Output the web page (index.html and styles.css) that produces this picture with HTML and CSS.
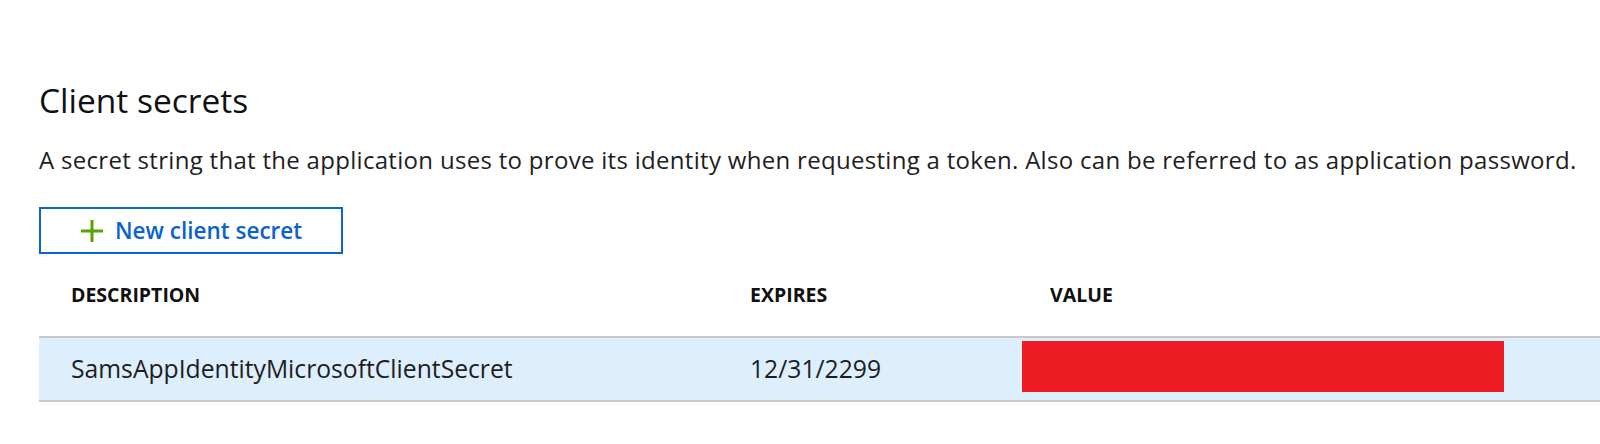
FILE: index.html
```html
<!DOCTYPE html>
<html lang="en">
<head>
<meta charset="utf-8">
<title>Client secrets</title>
<link rel="stylesheet" href="styles.css">
</head>
<body>
<section class="panel">
  <h2 class="title">Client secrets</h2>
  <p class="desc">A secret string that the application uses to prove its identity when requesting a token. Also can be referred to as application password.</p>
  <button class="new-btn" type="button">
    <svg class="plus" width="24" height="24" viewBox="0 0 24 24" aria-hidden="true"><path d="M12 1v22M1 12h22" stroke="#57a300" stroke-width="3" fill="none"/></svg>
    <span>New client secret</span>
  </button>
  <div class="table">
    <div class="thead">
      <div class="th">DESCRIPTION</div>
      <div class="th">EXPIRES</div>
      <div class="th">VALUE</div>
    </div>
    <div class="trow">
      <div class="td">SamsAppIdentityMicrosoftClientSecret</div>
      <div class="td">12/31/2299</div>
      <div class="td value"><div class="redact"></div></div>
    </div>
  </div>
</section>
</body>
</html>
```

FILE: styles.css
```css
html, body {
  margin: 0;
  padding: 0;
  background: #ffffff;
}
body {
  font-family: "Open Sans", "Noto Sans", "Liberation Sans", sans-serif;
  color: #1b1b1b;
}
.panel {
  padding: 78px 0 0 39px;
}
.title {
  margin: 0;
  font-size: 33.5px;
  font-weight: 400;
  line-height: 44px;
  color: #111111;
}
.desc {
  margin: 24px 0 0 0;
  font-size: 24px;
  letter-spacing: 0.3px;
  line-height: 28px;
  color: #1e1e1e;
  white-space: nowrap;
}
.new-btn {
  margin-top: 33px;
  display: flex;
  align-items: center;
  gap: 11px;
  box-sizing: border-box;
  width: 304px;
  height: 47px;
  padding: 0 0 0 39px;
  border: 2px solid #0a63d8;
  background: #ffffff;
  font-family: inherit;
  font-size: 22.5px;
  font-weight: 600;
  color: #0b63ce;
  cursor: pointer;
}
.plus {
  flex: none;
}
.table {
  margin-top: 28px;
}
.thead, .trow {
  display: grid;
  grid-template-columns: 679px 300px 1fr;
}
.thead {
  height: 54px;
  align-items: start;
}
.th {
  padding-left: 32px;
  font-size: 19.5px;
  font-weight: 700;
  line-height: 26px;
  color: #111111;
}
.trow {
  height: 62px;
  border-top: 2px solid #c8c8c8;
  border-bottom: 2px solid #c8c8c8;
  background: #ddeefd;
  align-items: center;
}
.td {
  padding-left: 32px;
  font-size: 24.7px;
  line-height: 30px;
  color: #1e1e1e;
}
.td.value {
  padding-left: 4px;
  align-self: start;
}
.redact {
  margin-top: 3px;
  width: 482px;
  height: 51px;
  background: #ed1c24;
}
```
